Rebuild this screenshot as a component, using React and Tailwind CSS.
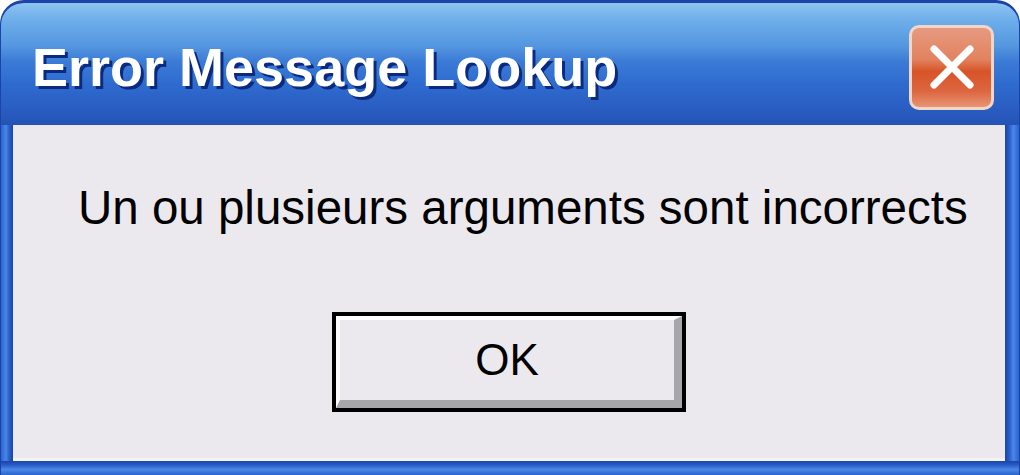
export default function App() {
  return (
    <div className="w-[1020px] h-[475px] bg-white">
      <div className="w-full h-full flex flex-col rounded-t-[24px] bg-[#2456c4] border-t-[3px] border-x-[1px] border-[#1d43a8] overflow-hidden">
        {/* title bar */}
        <div className="h-[122px] shrink-0 flex items-center justify-between pt-[6px] pl-[31px] pr-[25px] bg-[linear-gradient(to_bottom,#8cc4f0_0%,#6eaeea_14%,#5597e0_35%,#3b7bd6_48%,#2f6cd0_65%,#2a5ec2_85%,#2553b6_100%)] rounded-t-[22px]">
          <span
            className="text-white font-bold text-[54px] leading-none [text-shadow:3px_3px_0_#0a2a80]"
            style={{ fontFamily: '"Liberation Sans", Arial, sans-serif' }}
          >
            Error Message Lookup
          </span>
          <div className="w-[85px] h-[85px] rounded-[10px] border-[3px] border-[#f2d6c8] bg-[linear-gradient(to_bottom,#e69a80_0%,#e2825f_40%,#d75427_55%,#dd6640_80%,#e99474_100%)] flex items-center justify-center">
            <svg width="52" height="52" viewBox="0 0 52 52">
              <path d="M8 8 L44 44 M44 8 L8 44" stroke="white" strokeWidth="7" strokeLinecap="round" />
            </svg>
          </div>
        </div>
        {/* body with frame */}
        <div className="flex-1 flex">
          <div className="w-[12px] bg-[linear-gradient(to_right,#2b62d0,#4a88e6_40%,#2a5cc8_70%,#1a44a8)]" />
          <div className="flex-1 flex flex-col items-center bg-[#ebe9ed] border-b-[3px] border-[#f6f4f0]">
            <p
              className="self-start ml-[65px] mt-[59px] text-[47.5px] text-black leading-none"
              style={{ fontFamily: '"Liberation Sans", Arial, sans-serif' }}
            >
              Un ou plusieurs arguments sont incorrects
            </p>
            <button className="mt-[80px] w-[354px] h-[100px] border-[4px] border-black bg-[#ebe9ed] flex">
              <div className="flex-1 flex items-center justify-center border-t-[4px] border-l-[4px] border-b-[8px] border-r-[8px] border-t-white border-l-white border-b-[#a7a6aa] border-r-[#a7a6aa]">
                <span className="text-[44px] text-black leading-none" style={{ fontFamily: '"Liberation Sans", Arial, sans-serif' }}>
                  OK
                </span>
              </div>
            </button>
          </div>
          <div className="w-[14px] bg-[linear-gradient(to_right,#1a44a8,#2a5cc8_30%,#4a88e6_60%,#2b62d0)]" />
        </div>
        <div className="h-[14px] shrink-0 bg-[linear-gradient(to_bottom,#1a44a8,#2a5cc8_30%,#4a88e6_60%,#2b62d0)]" />
      </div>
    </div>
  );
}
